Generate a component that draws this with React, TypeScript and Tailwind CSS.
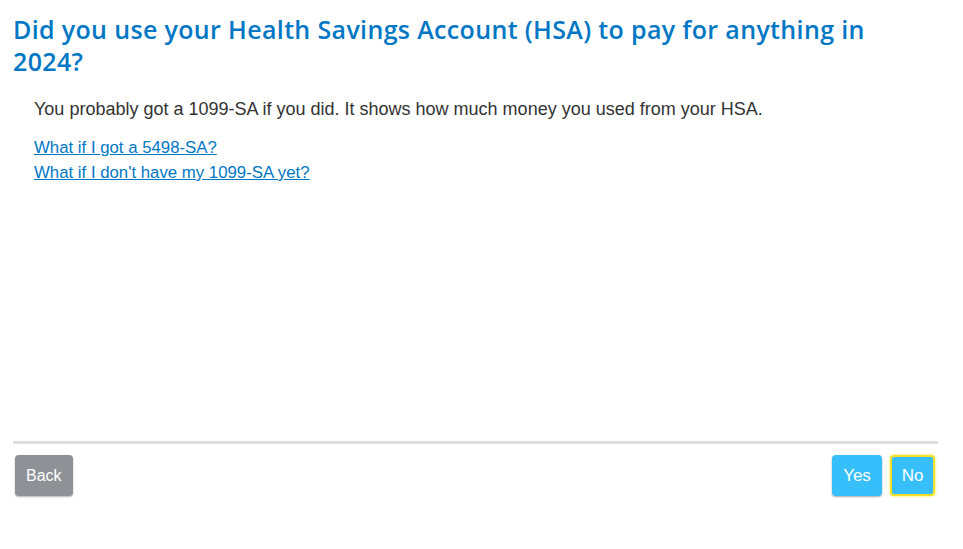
export default function App() {
  return (
    <div className="w-[963px] h-[549px] bg-white font-['Liberation_Sans',Arial,sans-serif]">
      <div className="pl-[13px] pr-[25px] pt-[13px]">
        <div className="h-[428px]">
          <h1 className="w-[890px] font-['Open_Sans',sans-serif] font-semibold text-[25px] leading-[32px] tracking-[0.35px] text-[#0077c5]">
            Did you use your Health Savings Account (HSA) to pay for anything in 2024?
          </h1>
          <div className="pl-[21px] pt-[21px]">
            <p className="text-[18px] leading-[22px] text-[#333]">
              You probably got a 1099-SA if you did. It shows how much money you used from your HSA.
            </p>
            <div className="pt-[15px] flex flex-col items-start text-[16.8px] leading-[25px]">
              <a href="#" className="text-[#0077c5] underline">What if I got a 5498-SA?</a>
              <a href="#" className="text-[#0077c5] underline">What if I don't have my 1099-SA yet?</a>
            </div>
          </div>
        </div>
        <div className="h-[3px] bg-[#dddddd]" />
        <div className="flex justify-between pt-[11px] pl-[2px] pr-[3px]">
          <button className="h-[41px] px-[11px] rounded-[4px] bg-[#8e9196] text-white text-[16px] shadow-[0_1px_2px_rgba(0,0,0,0.3)]">
            Back
          </button>
          <div className="flex gap-[8px]">
            <button className="h-[41px] w-[50px] rounded-[4px] bg-[#36bffa] text-white text-[17px] shadow-[0_1px_2px_rgba(0,0,0,0.35)]">
              Yes
            </button>
            <button className="h-[41px] w-[45px] rounded-[4px] bg-[#36bffa] text-white text-[17px] border-2 border-[#f5e12a] shadow-[0_0_3px_#ffe83a]">
              No
            </button>
          </div>
        </div>
      </div>
    </div>
  );
}
